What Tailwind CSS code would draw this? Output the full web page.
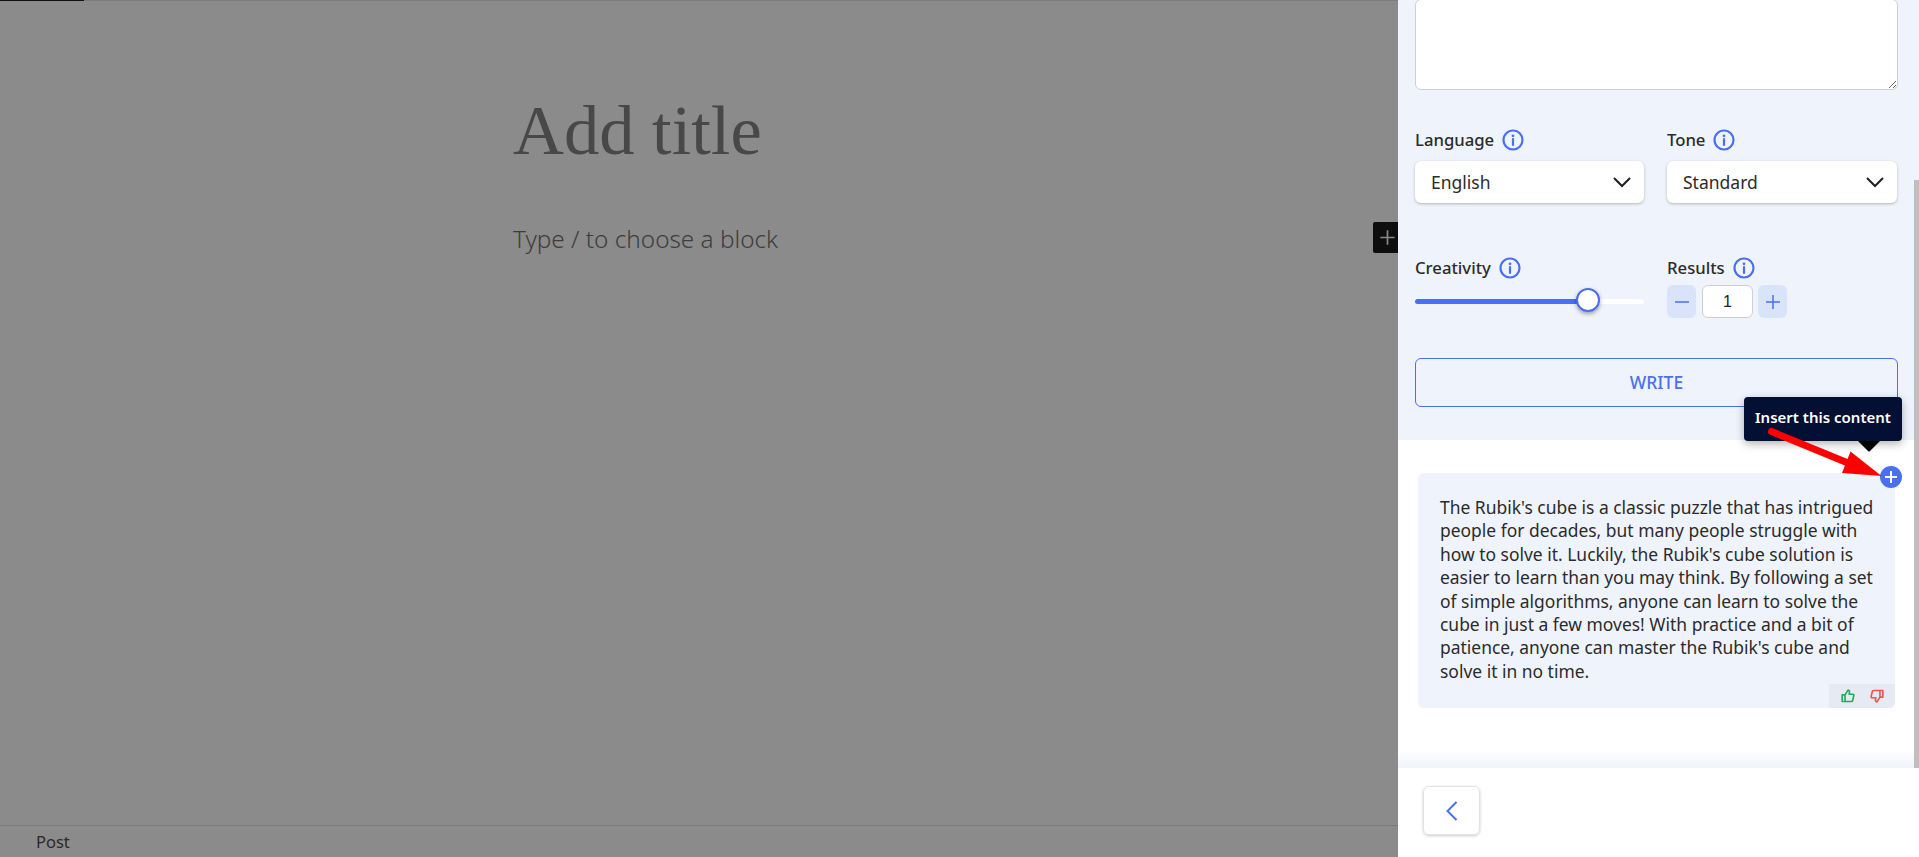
<!DOCTYPE html>
<html lang="en">
<head>
    <meta charset="UTF-8">
    <meta name="viewport" content="width=device-width, initial-scale=1.0">
    <title>Add title</title>
    <script src="https://cdn.jsdelivr.net/npm/@tailwindcss/browser@4"></script>
</head>
<body class="bg-[#8b8b8b] overflow-hidden font-['Noto_Sans',sans-serif]">
    <div class="relative flex h-[857px] w-[1919px]">

        <!-- dimmed editor -->
        <main class="relative flex w-[1398px] flex-col border-t border-[#7c7c7c]">
            <div class="absolute left-0 top-[-1px] h-[1px] w-[84px] bg-[#111]"></div>
            <div class="flex-1 pl-[513px]">
                <h1 class="mt-[89px] font-['Liberation_Serif',serif] text-[70.500px] leading-[80px] font-normal text-[#484848]">Add title</h1>
                <p class="mt-[54px] text-[24.300px] leading-[30px] font-light text-[#3d3d3d]">Type / to choose a block</p>
            </div>
            <div class="absolute right-0 top-[221px] flex h-[31px] w-[25px] items-center justify-center rounded-l-[2px] bg-[#0e0e0e]">
                <svg class="ml-[4px]" width="25" height="25" viewBox="0 0 25 25" fill="none" stroke="#8a8a8a" stroke-width="2"><path d="M12.5 4v17M4 12.5h17"/></svg>
            </div>
            <footer class="flex h-[32px] items-center border-t border-[#7a7a7a] pl-[36px] pt-[2px] text-[16.500px] text-[#2a2a2a]">Post</footer>
        </main>

        <!-- side panel -->
        <aside class="flex w-[521px] flex-col bg-white">
            <div class="flex h-[768px]">
                <div class="flex w-[516px] flex-col">
                    <section class="h-[440px] bg-[#eff3fb] pl-[17px] pr-[16px]">
                        <textarea class="block h-[91px] w-[483px] -translate-y-[1px] rounded-md border border-[#cfcfcf] bg-white"></textarea>

                        <div class="mt-[37px] grid grid-cols-[229px_230px] gap-x-[23px]">
                            <div>
                                <div class="flex h-[24px] items-center gap-[8px] text-[16.700px] font-medium text-[#2b2b2b]">
                                    Language
                                    <svg width="22" height="22" viewBox="0 0 22 22" fill="none" stroke="#4a6ff0" stroke-width="2.200"><circle cx="11" cy="11" r="9.500"/><path d="M11 10v6" stroke-linecap="round"/><circle cx="11" cy="6.800" r="1.400" fill="#4a6ff0" stroke="none"/></svg>
                                </div>
                                <div class="mt-[9px] flex h-[42px] items-center justify-between rounded-md bg-white pl-[16px] pr-[12px] text-[17.500px] text-[#2b2b2b] shadow-[0_1px_3px_rgba(0,0,0,0.25)]">
                                    English
                                    <svg width="20" height="12" viewBox="0 0 20 12" fill="none" stroke="#1f1f1f" stroke-width="2"><path d="M2 2l8 8 8-8"/></svg>
                                </div>
                            </div>
                            <div>
                                <div class="flex h-[24px] items-center gap-[8px] text-[16.700px] font-medium text-[#2b2b2b]">
                                    Tone
                                    <svg width="22" height="22" viewBox="0 0 22 22" fill="none" stroke="#4a6ff0" stroke-width="2.200"><circle cx="11" cy="11" r="9.500"/><path d="M11 10v6" stroke-linecap="round"/><circle cx="11" cy="6.800" r="1.400" fill="#4a6ff0" stroke="none"/></svg>
                                </div>
                                <div class="mt-[9px] flex h-[42px] items-center justify-between rounded-md bg-white pl-[16px] pr-[12px] text-[17.500px] text-[#2b2b2b] shadow-[0_1px_3px_rgba(0,0,0,0.25)]">
                                    Standard
                                    <svg width="20" height="12" viewBox="0 0 20 12" fill="none" stroke="#1f1f1f" stroke-width="2"><path d="M2 2l8 8 8-8"/></svg>
                                </div>
                            </div>
                        </div>

                        <div class="mt-[53px] grid grid-cols-[229px_230px] gap-x-[23px]">
                            <div>
                                <div class="flex h-[24px] items-center gap-[8px] text-[16.700px] font-medium text-[#2b2b2b]">
                                    Creativity
                                    <svg width="22" height="22" viewBox="0 0 22 22" fill="none" stroke="#4a6ff0" stroke-width="2.200"><circle cx="11" cy="11" r="9.500"/><path d="M11 10v6" stroke-linecap="round"/><circle cx="11" cy="6.800" r="1.400" fill="#4a6ff0" stroke="none"/></svg>
                                </div>
                                <div class="relative mt-[19px] h-[5px] rounded-full bg-white">
                                    <div class="h-full w-[170px] rounded-full bg-[#4a6ff0]"></div>
                                    <div class="absolute left-[161px] top-[-11px] h-[24px] w-[24px] rounded-full border-[2px] border-[#4a6ff0] bg-white shadow-[0_2px_4px_rgba(0,0,0,0.35)]"></div>
                                </div>
                            </div>
                            <div>
                                <div class="flex h-[24px] items-center gap-[8px] text-[16.700px] font-medium text-[#2b2b2b]">
                                    Results
                                    <svg width="22" height="22" viewBox="0 0 22 22" fill="none" stroke="#4a6ff0" stroke-width="2.200"><circle cx="11" cy="11" r="9.500"/><path d="M11 10v6" stroke-linecap="round"/><circle cx="11" cy="6.800" r="1.400" fill="#4a6ff0" stroke="none"/></svg>
                                </div>
                                <div class="mt-[5px] flex items-center gap-[6px]">
                                    <button class="flex h-[33px] w-[29px] items-center justify-center rounded-md bg-[#d9e4fb]">
                                        <svg width="14" height="14" viewBox="0 0 14 14" stroke="#4a6ff0" stroke-width="1.500"><path d="M0 7h14"/></svg>
                                    </button>
                                    <div class="flex h-[33px] w-[51px] items-center justify-center rounded-md border border-[#cfcfcf] bg-white font-['Liberation_Sans',sans-serif] text-[16px] text-[#222]">1</div>
                                    <button class="-ml-[1px] flex h-[33px] w-[29px] items-center justify-center rounded-md bg-[#d9e4fb]">
                                        <svg width="14" height="14" viewBox="0 0 14 14" stroke="#4a6ff0" stroke-width="1.500"><path d="M0 7h14M7 0v14"/></svg>
                                    </button>
                                </div>
                            </div>
                        </div>

                        <button class="mt-[40px] h-[49px] w-[483px] rounded-md border border-[#4a6ff0] text-[17.500px] font-medium text-[#4a6ff0]">WRITE</button>
                    </section>

                    <section class="flex flex-1 flex-col">
                        <div class="relative ml-[20px] mr-[19px] mt-[33px] h-[235px] rounded-md bg-[#eff3fb] pl-[22px] pr-[20px] pt-[23px] text-[17.450px] leading-[23.400px] text-[#2b2b2b]">
                            <p>The Rubik's cube is a classic puzzle that has intrigued people for decades, but many people struggle with how to solve it. Luckily, the Rubik's cube solution is easier to learn than you may think. By following a set of simple algorithms, anyone can learn to solve the cube in just a few moves! With practice and a bit of patience, anyone can master the Rubik's cube and solve it in no time.</p>
                            <div class="absolute bottom-0 right-0 flex h-[24px] w-[66px] items-center justify-around rounded-br-md bg-[#e6eaf2] px-[4px]">
                                <svg width="14" height="14" viewBox="0 0 24 24" fill="none" stroke="#1fae5c" stroke-width="2.800" stroke-linejoin="round"><path d="M7 10l5-8c2 0 3 1.500 2.500 3.500L14 9h6.500c1 0 1.800 1 1.500 2l-2 9c-.2 1-1 1.500-2 1.500H7zM7 10H2v11.500h5"/></svg>
                                <svg width="14" height="14" viewBox="0 0 24 24" fill="none" stroke="#ef5350" stroke-width="2.800" stroke-linejoin="round"><path d="M17 14l-5 8c-2 0-3-1.500-2.500-3.500L10 15H3.500c-1 0-1.800-1-1.500-2l2-9c.2-1 1-1.500 2-1.500H17zM17 14h5V2.500h-5"/></svg>
                            </div>
                        </div>
                        <div class="mt-auto h-[18px] bg-gradient-to-b from-white to-[#eff3fb]"></div>
                    </section>
                </div>
                <!-- scrollbar -->
                <div class="flex w-[5px] flex-col bg-[#eff3fb]">
                    <div class="mt-[180px] flex-1 bg-[#bfbfbf]"></div>
                </div>
            </div>

            <div class="flex-1 pl-[25px] pt-[18px]">
                <button class="flex h-[49px] w-[57px] items-center justify-center rounded-md border border-[#e2e2e2] shadow-[0_1px_3px_rgba(0,0,0,0.2)]">
                    <svg width="12" height="20" viewBox="0 0 12 20" fill="none" stroke="#4a6ff0" stroke-width="2"><path d="M10.500 1L1.500 10l9 9"/></svg>
                </button>
            </div>
        </aside>

        <!-- tooltip + annotation -->
        <div class="absolute left-[1744px] top-[397px] flex h-[44px] w-[158px] items-center justify-center rounded-[4px] bg-[#041033] pb-[3px] text-[15px] font-semibold text-white shadow-[0_3px_8px_rgba(0,0,0,0.3)]">Insert this content</div>
        <svg class="absolute left-[1857px] top-[441px]" width="24" height="11" viewBox="0 0 24 11"><path d="M1 0h22L13 10q-1 1-2 0z" fill="#000"/></svg>
        <div class="absolute left-[1880px] top-[466px] flex h-[22px] w-[22px] items-center justify-center rounded-full bg-[#4a6ff0]">
            <svg width="12" height="12" viewBox="0 0 12 12" stroke="#fff" stroke-width="2"><path d="M0 6h12M6 0v12"/></svg>
        </div>
        <svg class="absolute left-[1760px] top-[420px]" width="130" height="65" viewBox="1760 420 130 65">
            <path d="M1771.500 431.500L1848 463" stroke="#ff0000" stroke-width="7" stroke-linecap="round"/>
            <path d="M1881.500 476L1850.500 451.500L1842 473z" fill="#ff0000"/>
        </svg>
    </div>
</body>
</html>
